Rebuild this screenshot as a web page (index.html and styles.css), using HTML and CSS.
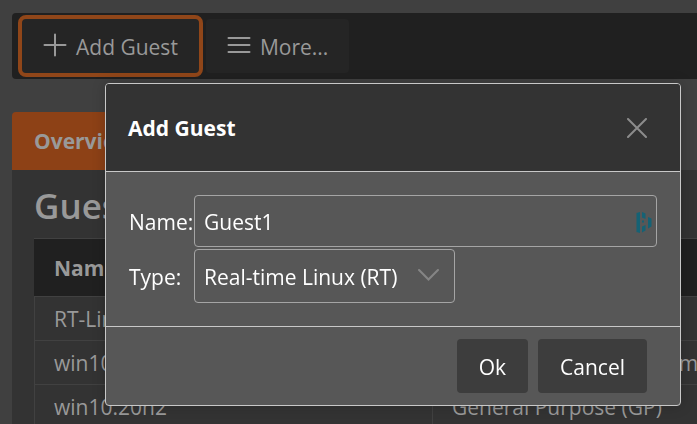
FILE: index.html
```html
<!DOCTYPE html>
<html lang="en">
<head>
    <meta charset="UTF-8">
    <title>Guests</title>
    <link rel="stylesheet" href="styles.css">
</head>
<body>
    <div class="toolbar">
        <button type="button" class="tool active">
            <svg class="icon" viewBox="0 0 24 24"><path d="M12 1.5v21M1.5 12h21"/></svg>
            Add Guest
        </button>
        <button type="button" class="tool">
            <svg class="icon" viewBox="0 0 24 24"><path d="M1.5 5h21M1.5 12h21M1.5 19h21"/></svg>
            More...
        </button>
    </div>

    <div class="tabs">
        <button type="button" class="tab">Overview</button>
    </div>
    <main class="panel">
        <h1>Guests</h1>
        <table class="guests">
            <thead>
                <tr><th>Name</th><th>Type</th></tr>
            </thead>
            <tbody>
                <tr><td>RT-Linux</td><td>Real-time Linux (RT)</td></tr>
                <tr><td>win10</td><td>General Purpose (GP)<span class="note">m</span></td></tr>
                <tr><td>win10.20h2</td><td>General Purpose (GP)</td></tr>
            </tbody>
        </table>
    </main>

    <div class="overlay">
        <form class="dialog" role="dialog" aria-labelledby="dialog-title">
            <header class="dialog-header">
                <h2 id="dialog-title">Add Guest</h2>
                <button type="button" class="close" aria-label="Close">
                    <svg viewBox="0 0 20 20"><path d="M1 1l18 18M19 1L1 19"/></svg>
                </button>
            </header>
            <div class="dialog-body">
                <label for="guest-name">Name:</label>
                <div class="field">
                    <input type="text" id="guest-name" value="Guest1">
                    <svg class="manager" viewBox="0 0 16 21">
                        <path d="M0.5 1l3.5-1v21l-3.500-1zM6 0l3.500 1.500v5.500l-3.500-1.500zM6 8.500h2v2h-2zM6 14.500l3.500-1.500v5.500l-3.500 2zM12 5l3.500 1.500v8l-3.500 2z"/>
                    </svg>
                </div>
                <label for="guest-type">Type:</label>
                <div class="field select">
                    <select id="guest-type">
                        <option>Real-time Linux (RT)</option>
                        <option>General Purpose (GP)</option>
                    </select>
                    <svg class="arrow" viewBox="0 0 20 12"><path d="M1 1l9 9 9-9"/></svg>
                </div>
            </div>
            <footer class="dialog-footer">
                <button type="submit">Ok</button>
                <button type="button">Cancel</button>
            </footer>
        </form>
    </div>
</body>
</html>
```
FILE: styles.css
```css
* {
    box-sizing: border-box;
}

body {
    margin: 0;
    padding: 13px 0 0 12px;
    height: 100vh;
    overflow: hidden;
    background-color: #404040;
    color: #999999;
    font-family: "Open Sans", "Noto Sans", sans-serif;
    font-size: 21px;
    line-height: 28px;
}

button, input, select {
    font: inherit;
    color: inherit;
}

svg {
    display: block;
    fill: none;
    stroke: currentColor;
    stroke-width: 2;
    stroke-linecap: round;
}

/* toolbar */
.toolbar {
    display: flex;
    align-items: center;
    gap: 3px;
    height: 66px;
    padding-left: 6px;
    background-color: #202020;
    border-radius: 4px 0 0 4px;
}

.tool {
    display: flex;
    align-items: center;
    gap: 9px;
    height: 54px;
    padding: 2px 21px 0;
    border: 0;
    border-radius: 4px;
    background-color: #252525;
}

.tool.active {
    height: 62px;
    border: 4px solid #904619;
    border-radius: 8px;
}

.icon {
    width: 24px;
    height: 24px;
    margin-top: -4px;
}

/* tabs and guest table */
.tabs {
    margin-top: 33px;
}

.tab {
    display: block;
    height: 58px;
    padding: 0 22px;
    border: 0;
    border-radius: 4px 0 0 0;
    background-color: #8d4116;
    font-weight: bold;
}

.panel {
    padding: 12px 0 0 22px;
    background-color: #333333;
}

h1 {
    margin: 0;
    font-size: 35px;
    font-weight: 600;
    line-height: 48px;
}

.guests {
    width: 100%;
    margin-top: 8px;
    border-collapse: collapse;
    table-layout: fixed;
}

.guests th,
.guests td {
    height: 44px;
    padding: 0 18px 0 19px;
    border: 1px solid #414141;
    border-right: 0;
    text-align: left;
    white-space: nowrap;
}

.guests th {
    height: 58px;
    background-color: #202020;
    border-left-color: #202020;
}

.guests th:first-child {
    width: 398px;
}

.note {
    margin-left: 17px;
}

/* dialog */
.overlay {
    position: fixed;
    inset: 0;
    padding: 83px 16px 0 105px;
}

.dialog {
    border: 1px solid #c8c8c8;
    border-radius: 4px;
    overflow: hidden;
    background-color: #575757;
    color: #ffffff;
    box-shadow: 0 0 14px rgba(0, 0, 0, 0.2);
}

.dialog-header {
    display: flex;
    align-items: center;
    justify-content: space-between;
    padding: 30px 33px 29px 22px;
    background-color: #333333;
    border-bottom: 1px solid #c8c8c8;
}

h2 {
    margin: 0;
    font-size: 21px;
}

.close {
    padding: 0;
    border: 0;
    background: none;
    color: #8c8c8c;
}

.close svg {
    width: 20px;
    height: 20px;
}

.dialog-body {
    display: grid;
    grid-template-columns: 65px 1fr;
    align-items: center;
    row-gap: 2px;
    padding: 23px;
}

.dialog-body label {
    padding-top: 2px;
}

.field {
    position: relative;
}

.field input,
.field select {
    display: block;
    width: 100%;
    height: 52px;
    padding: 2px 9px 0;
    border: 1px solid #a5a5a5;
    border-radius: 4px;
    background: none;
    appearance: none;
}

.select {
    width: 261px;
}

.field select {
    height: 54px;
}

.arrow {
    position: absolute;
    top: 20px;
    right: 16px;
    width: 21px;
    color: #858585;
    pointer-events: none;
}

.manager {
    position: absolute;
    top: 17px;
    right: 5px;
    width: 16px;
    fill: #156275;
    stroke: none;
}

.dialog-footer {
    display: flex;
    justify-content: flex-end;
    gap: 10px;
    padding: 12px 33px;
    border-top: 1px solid #c8c8c8;
}

.dialog-footer button {
    height: 54px;
    padding: 2px 22px 0;
    border: 0;
    border-radius: 4px;
    background-color: #3d3d3d;
}
```
